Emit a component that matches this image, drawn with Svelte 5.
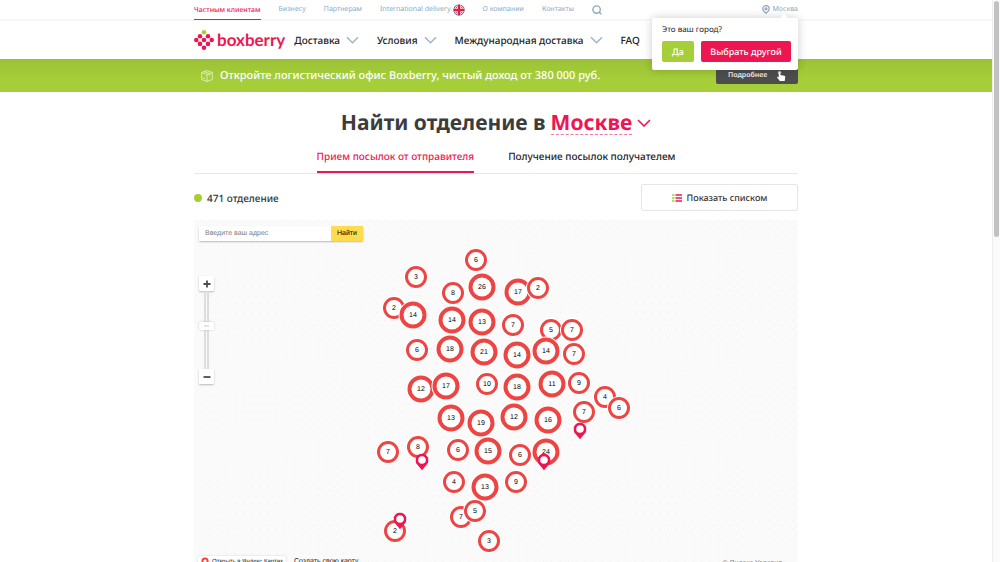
<script>
  const topLinks = ['Бизнесу', 'Партнерам'];
  const menu = ['Доставка', 'Условия', 'Международная доставка'];

  // [x, y, count]: centre on the map canvas, x measured from the canvas middle
  const clusters = [
    [-20, 40, 6], [-80, 57, 3], [-43, 73, 8], [-14, 67, 26], [22, 72, 17], [42, 68, 2],
    [-102, 88, 2], [-83, 95, 14], [-44, 100, 14], [-14, 102, 13], [17, 105, 7],
    [55, 110, 5], [76, 110, 7], [-79, 130, 6], [-46, 129, 18], [-12, 132, 21],
    [21, 135, 14], [50, 131, 14], [78, 134, 7], [-75, 169, 12], [-50, 166, 17],
    [-9, 164, 10], [21, 167, 18], [56, 164, 11], [83, 163, 9], [109, 177, 4],
    [123, 188, 6], [-45, 198, 13], [-15, 203, 19], [18, 197, 12], [52, 200, 16],
    [88, 192, 7], [-108, 232, 7], [-78, 227, 8], [-38, 230, 6], [-8, 231, 15],
    [24, 235, 6], [50, 232, 24], [-42, 262, 4], [-11, 267, 13], [20, 262, 9],
    [-35, 297, 7], [-21, 291, 5], [-101, 311, 2], [-7, 321, 3]
  ];
  const pins = [[84, 211], [-74, 242], [48, 242], [-96, 301]];
  const isLarge = (n) => n > 10;

  let address = $state('');
</script>

{#snippet chevron()}
  <svg class="chevron" viewBox="0 0 14 8" aria-hidden="true"><path d="M1 1l6 6 6-6" /></svg>
{/snippet}

<div class="screen">
  <div class="page">
    <header>
      <div class="topbar">
        <div class="wrap topline">
          <a class="current" href="#private">Частным клиентам</a>
          {#each topLinks as t}<a href="#top">{t}</a>{/each}
          <a href="#intl" class="intl">International delivery
            <svg class="flag" viewBox="0 0 12 12" aria-hidden="true">
              <defs><clipPath id="round"><circle cx="6" cy="6" r="5.6" /></clipPath></defs>
              <g clip-path="url(#round)">
                <rect width="12" height="12" fill="#3a5590" />
                <path d="M0 0l12 12M12 0L0 12" stroke="#fff" stroke-width="2" />
                <path d="M0 0l12 12M12 0L0 12" stroke="#e0203e" stroke-width=".8" />
                <path d="M6 0v12M0 6h12" stroke="#fff" stroke-width="3.4" />
                <path d="M6 0v12M0 6h12" stroke="#e0203e" stroke-width="2.4" />
              </g>
            </svg>
          </a>
          <a href="#about">О компании</a>
          <a href="#contacts">Контакты</a>
          <button class="bare search" aria-label="Поиск">
            <svg viewBox="0 0 10 10"><circle cx="4.6" cy="4.6" r="3.7" /><path d="M7 7l2.4 2.3" /></svg>
          </button>
          <a class="city" href="#city">
            <svg viewBox="0 0 8 9" aria-hidden="true"><path d="M4 8.3C2.2 7 .8 5.6.8 3.900a3.200 3.200 0 0 1 6.400 0C7.200 5.600 5.800 7 4 8.300z" /><circle cx="4" cy="3.800" r="1" /></svg>
            Москва
          </a>
        </div>
      </div>
      <div class="wrap mainnav">
        <a class="logo" href="#home">
          <svg viewBox="0 0 20 20" aria-hidden="true">
            <g fill="#ed1651">
              <circle cx="6" cy="6.200" r="2.300" /><circle cx="14" cy="6.200" r="2.300" />
              <circle cx="2.300" cy="10" r="2.300" /><circle cx="10" cy="10" r="2.300" /><circle cx="17.700" cy="10" r="2.300" />
              <circle cx="6" cy="13.900" r="2.300" /><circle cx="14" cy="13.900" r="2.300" />
              <circle cx="10" cy="17.700" r="2.300" />
            </g>
            <circle cx="10" cy="2.300" r="2.300" fill="#a6ce39" />
          </svg>
          <span>boxberry</span>
        </a>
        <nav>
          {#each menu as m}<a href="#menu">{m}{@render chevron()}</a>{/each}
          <a href="#faq">FAQ</a>
        </nav>
      </div>
      <div class="wrap anchor">
        <div class="popup" role="dialog" aria-label="Город">
          <p>Это ваш город?</p>
          <div class="answers">
            <button class="yes">Да</button>
            <button class="other">Выбрать другой</button>
          </div>
        </div>
      </div>
    </header>

    <div class="banner">
      <div class="wrap promo">
        <svg class="box" viewBox="0 0 12 12" aria-hidden="true"><path d="M6 .6l5.300 1.900v7L6 11.500.7 9.500v-7zM.7 2.500L6 4.600l5.300-2.100M6 4.600v6.900M3.300 1.600l5.300 2v2.200M2 7.800l2 .8" /></svg>
        <strong>Откройте логистический офис Boxberry, чистый доход от 380 000 руб.</strong>
        <button class="more">Подробнее
          <svg viewBox="0 0 10 12" aria-hidden="true"><circle cx="3.500" cy="2.500" r="1.800" fill="#a8a8a8" /><path d="M2.700 2.200q.9-1 1.700 0V5l4 .8q1 .3.9 1.300L8.700 11H3.800L1 7.300q.2-1 1.700-.1z" fill="#fff" /></svg>
        </button>
      </div>
    </div>

    <main class="wrap">
      <h1>Найти отделение в <button class="bare pick">Москве</button>{@render chevron()}</h1>
      <div class="tabs" role="tablist">
        <button class="bare" role="tab" aria-selected="true">Прием посылок от отправителя</button>
        <button class="bare" role="tab" aria-selected="false">Получение посылок получателем</button>
      </div>
      <div class="summary">
        <span class="count">471 отделение</span>
        <button class="list">
          <svg viewBox="0 0 10 8" aria-hidden="true"><path d="M0 1h2.500M0 4h2.500M0 7h2.500" stroke="#a6ce39" /><path d="M3.500 1H10M3.500 4H10M3.500 7H10" stroke="#ed1651" /></svg>
          Показать списком
        </button>
      </div>

      <section class="map" aria-label="Карта отделений">
        <svg class="dots" aria-hidden="true">
          <defs><pattern id="dot" width="8.333" height="8.333" patternUnits="userSpaceOnUse"><rect x="7.300" y="0" width="1" height="1" fill="#ececec" /></pattern></defs>
          <rect width="100%" height="100%" fill="url(#dot)" />
        </svg>
        {#each clusters as [x, y, n]}
          <button class="cluster" class:large={isLarge(n)} style="left: calc(50% + {x}px); top: {y}px">{n}</button>
        {/each}
        {#each pins as [x, y]}
          <svg class="pin" viewBox="0 0 13 17" style="left: calc(50% + {x}px); top: {y}px" aria-hidden="true">
            <path d="M6.500 16.800L1.700 11A6.500 6.500 0 1 1 11.300 11z" fill="#ed1651" /><circle cx="6.500" cy="6.500" r="3.800" fill="#fff" />
          </svg>
        {/each}
        <form class="find" onsubmit={(e) => e.preventDefault()}>
          <input aria-label="Адрес" placeholder="Введите ваш адрес" bind:value={address} />
          <button>Найти</button>
        </form>
        <div class="zoom">
          <button aria-label="Приблизить"><svg viewBox="0 0 8 8"><path d="M4 .5v7M.5 4h7" /></svg></button>
          <div class="track"><span></span></div>
          <button aria-label="Отдалить"><svg viewBox="0 0 8 8"><path d="M.5 4h7" /></svg></button>
        </div>
        <div class="credits">
          <a class="open" href="#maps"><svg viewBox="0 0 8 10" aria-hidden="true"><circle cx="4" cy="4" r="2.600" /><path d="M4 7v3" /></svg>Открыть в Яндекс.Картах</a>
          <a href="#create">Создать свою карту</a>
          <span class="terms">© Яндекс Условия</span>
        </div>
      </section>
    </main>
  </div>
  <div class="scrollbar"><span></span></div>
</div>

<style>
  :global(body) { margin: 0; background: #fff; overflow: hidden; }
  .screen {
    display: grid;
    grid-template-columns: 1fr 8px;
    height: 100vh;
    overflow: hidden;
    font-family: "Noto Sans", "Open Sans", sans-serif;
    text-rendering: geometricPrecision;
    color: #333;
  }
  .page { min-width: 0; }
  .wrap { box-sizing: border-box; max-width: 604px; margin: 0 auto; }
  a { color: inherit; text-decoration: none; white-space: nowrap; }
  button, input { text-rendering: inherit; }
  button { font: inherit; color: inherit; border: 0; padding: 0; cursor: pointer; white-space: nowrap; }
  .bare { background: none; }
  svg { display: block; flex: none; }

  .scrollbar { background: #fafafa; border-left: 1px solid #ececec; padding: 1px 1px 0; }
  .scrollbar span { display: block; width: 5px; height: 236px; border-radius: 3px; background: #c1c1c1; }

  .topbar { border-bottom: 2px solid #f7f7f7; }
  .topline { display: flex; align-items: center; gap: 18px; height: 19px; font-size: 7px; line-height: 21px; color: #8fa9bf; }
  .topline .current { height: 19px; color: #ed1651; font-weight: 500; box-shadow: 0 1px #ed1651; }
  .intl { display: flex; align-items: center; gap: 2px; }
  .flag { width: 12px; height: 12px; }
  .search svg { width: 10px; height: 10px; fill: none; stroke: #8fa9bf; stroke-width: 1.4; }
  .city { display: flex; align-items: center; gap: 2px; margin-left: auto; }
  .city svg { width: 8px; height: 9px; fill: none; stroke: #8fa9bf; stroke-width: 1.3; }

  .mainnav { display: flex; align-items: center; gap: 9px; height: 38px; }
  .logo { display: flex; align-items: center; gap: 3px; color: #ed1651; font: 700 17px/20px Lato, sans-serif; }
  .logo svg { width: 20px; height: 20px; }
  nav { display: flex; gap: 18px; font-size: 10px; font-weight: 500; line-height: 20px; color: #222; }
  nav a { display: flex; align-items: center; gap: 6px; }
  .chevron { width: 13px; height: 8px; fill: none; stroke: #9fb5c8; stroke-width: 1.6; }

  .anchor { position: relative; }
  .popup {
    position: absolute; right: 0; bottom: -11px; z-index: 2;
    box-sizing: border-box; width: 146px; padding: 5px 7px 8px 10px;
    background: #fff; border-radius: 2px; box-shadow: 0 0 10px #0003;
  }
  .popup::before {
    content: ""; position: absolute; top: -4px; right: 10px;
    border: solid transparent; border-width: 0 4px 4px; border-bottom-color: #fff;
  }
  .popup p { margin: 0 0 4px; font-size: 8px; line-height: 14px; color: #222; }
  .answers { display: flex; gap: 7px; font-size: 9px; font-weight: 500; line-height: 21px; color: #fff; }
  .yes { width: 32px; background: #a6ce39; border-radius: 2px; }
  .other { flex: 1; background: #ed1651; border-radius: 2px; }

  .banner { background: linear-gradient(#9ac235, #a6ce39 60%); }
  .promo { display: flex; align-items: center; height: 33px; padding-left: 7px; color: #fff; font-size: 11px; }
  .promo strong { margin-left: 7px; font-weight: 500; white-space: nowrap; }
  .box { width: 12px; height: 12px; fill: none; stroke: #e9f3cf; stroke-width: .8; }
  .more {
    display: flex; align-items: center; justify-content: space-between;
    width: 82px; height: 16px; margin-left: auto; padding: 0 12px;
    background: #4d4d4d; border-radius: 2px; font-size: 7px; font-weight: 600; color: #eee;
  }
  .more svg { width: 10px; height: 12px; }

  h1 { display: flex; justify-content: center; align-items: center; gap: 5px; margin: 0; padding: 16px 0 10px; font-size: 21px; font-weight: 700; line-height: 30px; color: #3c3c3c; }
  .pick { color: #ed1651; line-height: 22px; border-bottom: 1px dashed #f07a9b; }
  h1 :global(.chevron) { width: 14px; stroke: #ed1651; }
  .tabs { display: flex; justify-content: center; gap: 34px; border-bottom: 1px solid #e8e8e8; font-size: 10px; font-weight: 500; }
  .tabs button { height: 25px; padding-bottom: 9px; color: #222; line-height: 14px; }
  .tabs button[aria-selected="true"] { color: #ed1651; box-shadow: inset 0 -2px #ed1651; }

  .summary { display: flex; justify-content: space-between; align-items: center; padding: 10px 0 9px; font-size: 10px; }
  .count { display: flex; align-items: center; gap: 5px; font-weight: 500; }
  .count::before { content: ""; width: 8px; height: 8px; border-radius: 50%; background: #a6ce39; }
  .list {
    display: flex; align-items: center; justify-content: center; gap: 5px;
    box-sizing: border-box; width: 157px; height: 27px; background: #fff;
    border: 1px solid #e6e6e6; border-radius: 2px; font-size: 9px; font-weight: 500;
  }
  .list svg { width: 10px; height: 8px; fill: none; stroke-width: 1.5; }

  .map { position: relative; min-height: 354px; background: #fafafa; font-family: "Liberation Sans", Arial, sans-serif; }
  .dots { position: absolute; inset: 0; width: 100%; height: 100%; }
  .cluster {
    position: absolute; transform: translate(-50%, -50%); box-sizing: border-box;
    width: 22px; height: 22px; border: 3px solid #ed4543; border-radius: 50%;
    box-shadow: 0 0 0 1px #fff; background: #fff; color: #000; font-size: 7px; line-height: 17px; text-align: center;
  }
  .cluster.large { width: 27px; height: 27px; border-width: 4px; line-height: 19px; }
  .pin { position: absolute; width: 13px; height: 17px; transform: translate(-50%, -50%); }
  .find { position: absolute; top: 6px; left: 5px; display: flex; height: 15px; box-shadow: 0 1px 2px #0004; border-radius: 1px; }
  .find input { box-sizing: border-box; width: 132px; padding: 0 6px; border: 0; background: #fff; font: 7px "Liberation Sans", Arial, sans-serif; }
  .find input::placeholder { color: #808080; }
  .find button { width: 32px; background: #ffdb4d; font-size: 7px; color: #000; }
  .zoom { position: absolute; top: 56px; left: 5px; display: flex; flex-direction: column; align-items: center; }
  .zoom button { display: grid; place-items: center; width: 15px; height: 15px; background: #fff; border-radius: 1px; box-shadow: 0 1px 2px #0004; }
  .zoom svg { width: 8px; height: 8px; stroke: #4d4d4d; stroke-width: 1.8; }
  .track { box-sizing: border-box; display: flex; justify-content: center; width: 5px; height: 78px; border: solid #ddd; border-width: 0 2px; }
  .track span { flex: none; width: 15px; height: 8px; margin-top: 31px; background: #fff; border-radius: 1px; box-shadow: 0 0 2px #0004; }
  .track span::before { content: ""; display: block; width: 5px; height: 2px; margin: 3px auto; background: #e4e4e4; }
  .credits { position: absolute; top: 336px; left: 4px; right: 4px; display: flex; align-items: flex-start; gap: 8px; font-size: 7px; line-height: 12px; color: #222; }
  .open { display: flex; align-items: center; gap: 3px; padding: 0 3px; background: #fff; border-radius: 2px; box-shadow: 0 0 2px #0003; font-size: 6px; }
  .open svg { width: 8px; height: 10px; fill: #fff; stroke: #f43; stroke-width: 2; }
  .terms { margin-left: auto; padding: 2px 12px 0; color: #777; }
</style>
